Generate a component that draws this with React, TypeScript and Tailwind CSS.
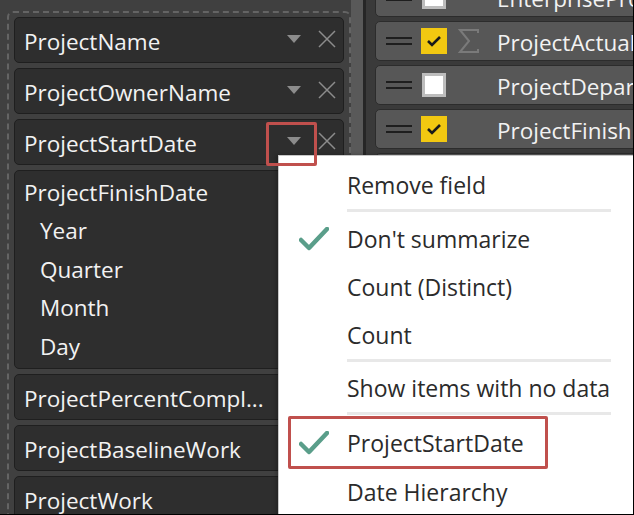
import React from 'react';

const font = { fontFamily: '"Open Sans", "Noto Sans", sans-serif' };

function Caret() {
  return (
    <svg width="14" height="8" viewBox="0 0 14 8" className="shrink-0">
      <path d="M0 0 L14 0 L7 8 Z" fill="#8c8c8c" />
    </svg>
  );
}

function Close() {
  return (
    <svg width="18" height="18" viewBox="0 0 18 18" className="shrink-0">
      <path d="M1 1 L17 17 M17 1 L1 17" stroke="#8c8c8c" strokeWidth="1.5" />
    </svg>
  );
}

function FieldRow({ name, controls = true }: { name: string; controls?: boolean }) {
  return (
    <div className="flex h-[46px] items-center rounded-[5px] border border-[#1f1f1f] bg-[#2e2e2e] pl-[9px] pr-[7px]">
      <span className="mt-[3px] flex-1 truncate text-[22.5px] text-[#f2f2f2]">{name}</span>
      {controls && (
        <div className="flex items-center gap-[17px] pb-[2px]">
          <Caret />
          <Close />
        </div>
      )}
    </div>
  );
}

function Check({ color }: { color: string }) {
  return (
    <svg width="30" height="24" viewBox="0 0 30 24">
      <path d="M2 13 L10 21 L28 2" stroke={color} strokeWidth="4.5" fill="none" strokeLinecap="round" strokeLinejoin="round" />
    </svg>
  );
}

function Sigma() {
  return (
    <svg width="22" height="24" viewBox="0 0 22 24">
      <path d="M20 4 L20 1 L2 1 L11 12 L2 23 L20 23 L20 20" stroke="#7a7a7a" strokeWidth="2" fill="none" />
    </svg>
  );
}

function FieldCard({ label, state, sigma }: { label: string; state: 'on' | 'off'; sigma?: boolean }) {
  return (
    <div className="flex h-[40px] shrink-0 items-center rounded-[5px] border border-[#2c2c2c] bg-[#575757] pl-[10px]">
      <div className="flex w-[26px] flex-col gap-[4px]">
        <div className="h-[2px] bg-[#1e1e1e]" />
        <div className="h-[2px] bg-[#1e1e1e]" />
      </div>
      <div className="ml-[9px] flex h-[26px] w-[26px] items-center justify-center">
        {state === 'on' ? (
          <div className="flex h-[26px] w-[26px] items-center justify-center bg-[#f2c811]">
            <svg width="16" height="12" viewBox="0 0 16 12">
              <path d="M2 6 L6 10 L14 2" stroke="#1a1a1a" strokeWidth="2.6" fill="none" />
            </svg>
          </div>
        ) : (
          <div className="h-[24px] w-[24px] border-[3px] border-[#bdbdbd] bg-white" />
        )}
      </div>
      <div className="flex w-[50px] pl-[11px]">{sigma && <Sigma />}</div>
      <span className="mt-[3px] whitespace-nowrap text-[22.5px] text-[#f2f2f2]">{label}</span>
    </div>
  );
}

function MenuItem({ label, checked, h = 'h-[48px]' }: { label: string; checked?: boolean; h?: string }) {
  return (
    <div className={`flex items-center ${h}`}>
      <div className="flex w-[68px] justify-center pl-[2px]">{checked && <Check color="#5a9e8a" />}</div>
      <span className="whitespace-nowrap text-[23px] text-[#2b2b2b]">{label}</span>
    </div>
  );
}

function Sep() {
  return <div className="ml-[68px] h-[3px] w-[264px] bg-[#e8e8e8]" />;
}

export default function App() {
  return (
    <div style={font} className="relative flex h-[515px] w-[634px] overflow-hidden border-r border-b border-black bg-[#404040]">
      {/* left: fields well */}
      <div className="w-[351px] shrink-0 pl-[7px] pt-[11px]">
        <div className="flex flex-col gap-[5px] rounded-t-[6px] border-2 border-b-0 border-dashed border-[#646464] px-[5px] pt-[4px]">
          <FieldRow name="ProjectName" />
          <FieldRow name="ProjectOwnerName" />
          <FieldRow name="ProjectStartDate" />
          <div className="flex h-[199px] flex-col rounded-[5px] border border-[#1f1f1f] bg-[#2e2e2e] pl-[9px] pt-[5px] text-[22.5px] text-[#f2f2f2]">
            <span className="h-[38px]">ProjectFinishDate</span>
            <div className="flex flex-col pl-[16px]">
              <span className="h-[39px]">Year</span>
              <span className="h-[38px]">Quarter</span>
              <span className="h-[39px]">Month</span>
              <span className="h-[38px]">Day</span>
            </div>
          </div>
          <FieldRow name="ProjectPercentCompl..." controls={false} />
          <FieldRow name="ProjectBaselineWork" controls={false} />
          <FieldRow name="ProjectWork" controls={false} />
        </div>
      </div>
      <div className="w-[12px] shrink-0 bg-[#595959]" />
      <div className="w-[3px] shrink-0 bg-[#262626]" />
      {/* right: field list */}
      <div className="flex flex-1 flex-col gap-[4px] bg-[#3a3a3a] pl-[9px]">
        <div className="-mt-[23px]">
          <FieldCard label="EnterpriseProjectType" state="off" />
        </div>
        <FieldCard label="ProjectActualWork" state="on" sigma />
        <FieldCard label="ProjectDepartments" state="off" />
        <FieldCard label="ProjectFinishDate" state="on" />
        <FieldCard label="ProjectName" state="on" />
      </div>

      {/* highlight on caret */}
      <div className="absolute left-[266px] top-[122px] z-20 h-[44px] w-[51px] rounded-[2px] border-[3px] border-[#c0504d]" />

      {/* context menu */}
      <div className="absolute left-[278px] top-[155px] z-10 w-[360px] border-l border-t border-[#c8c8c8] bg-white pt-[5px] shadow-[-2px_0_4px_rgba(0,0,0,0.25)]">
        <MenuItem label="Remove field" />
        <div className="pb-[3px]"><Sep /></div>
        <MenuItem label="Don't summarize" checked />
        <MenuItem label="Count (Distinct)" />
        <MenuItem label="Count" />
        <div className="pb-[2px]"><Sep /></div>
        <MenuItem label="Show items with no data" />
        <div className="pb-[3px]"><Sep /></div>
        <MenuItem label="ProjectStartDate" checked h="h-[50px]" />
        <MenuItem label="Date Hierarchy" />
      </div>
      <div className="absolute left-[288px] top-[416px] z-20 h-[53px] w-[260px] rounded-[2px] border-[3px] border-[#c0504d]" />
    </div>
  );
}
